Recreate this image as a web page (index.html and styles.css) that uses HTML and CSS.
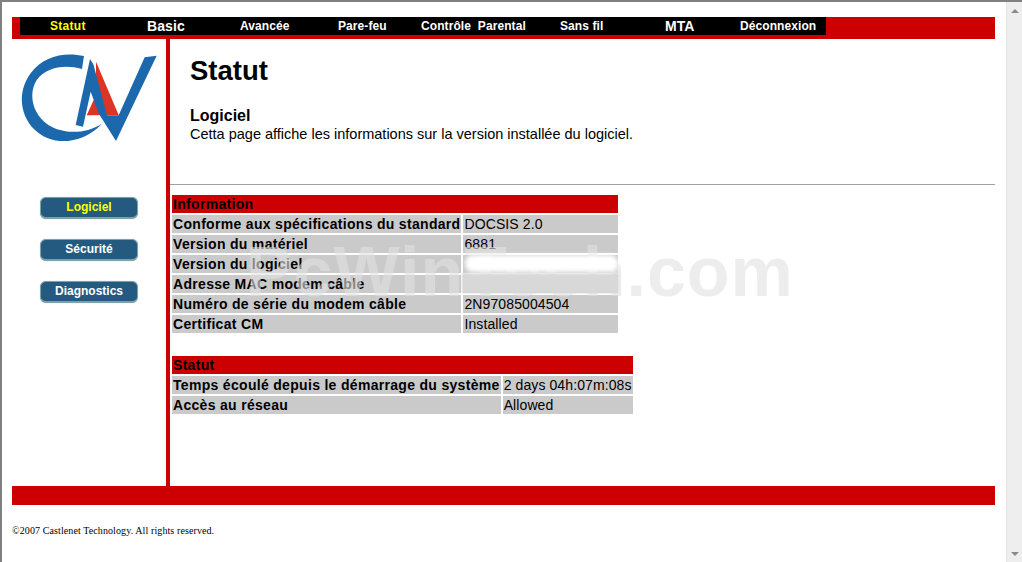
FILE: index.html
```html
<!DOCTYPE html>
<html lang="fr">
<head>
<meta charset="utf-8">
<title>Statut</title>
<link rel="stylesheet" href="styles.css">
</head>
<body>
<div class="window">
  <div class="page">
    <div class="topbar">
      <nav class="nav">
        <a class="nav-item active">Statut</a>
        <a class="nav-item large">Basic</a>
        <a class="nav-item">Avancée</a>
        <a class="nav-item">Pare-feu</a>
        <a class="nav-item">Contrôle  Parental</a>
        <a class="nav-item">Sans fil</a>
        <a class="nav-item large">MTA</a>
        <a class="nav-item">Déconnexion</a>
      </nav>
    </div>
    <div class="main">
      <aside class="sidebar">
        <svg class="logo" viewBox="6 0 459 315" width="153" height="105" aria-label="CN logo">
          <defs><filter id="soft"><feGaussianBlur stdDeviation="1.6"/></filter></defs>
          <g filter="url(#soft)">
            <path class="logo-red" d="M258 50 L326 210 L230 211 L258 150 Z"/>
            <path class="logo-blue" d="M222 33 C165 20 100 32 62 85 C22 140 28 210 75 255 C125 304 215 300 276 236 C225 268 160 268 115 240 C65 205 55 145 80 105 C110 65 165 58 216 72 Z"/>
            <path class="logo-blue" d="M240 42 L197 240 L219 245 L242 140 L267 207 L318 288 L440 32 L404 37 L326 211 L291 211 L250 58 Z"/>
          </g>
        </svg>
        <div class="side-menu">
          <a class="side-button active">Logiciel</a>
          <a class="side-button">Sécurité</a>
          <a class="side-button">Diagnostics</a>
        </div>
      </aside>
      <section class="content">
        <header class="intro">
          <h1>Statut</h1>
          <h2>Logiciel</h2>
          <p>Cetta page affiche les informations sur la version installée du logiciel.</p>
        </header>
        <table class="info first">
          <tr class="head"><th colspan="2">Information</th></tr>
          <tr><th>Conforme aux spécifications du standard</th><td>DOCSIS 2.0</td></tr>
          <tr><th>Version du matériel</th><td>6881</td></tr>
          <tr><th>Version du logiciel</th><td>&nbsp;</td></tr>
          <tr><th>Adresse MAC modem câble</th><td>&nbsp;</td></tr>
          <tr><th>Numéro de série du modem câble</th><td>2N97085004504</td></tr>
          <tr><th>Certificat CM</th><td class="wide-first">Installed</td></tr>
        </table>
        <table class="info">
          <tr class="head"><th colspan="2">Statut</th></tr>
          <tr><th>Temps écoulé depuis le démarrage du système</th><td>2 days 04h:07m:08s</td></tr>
          <tr><th>Accès au réseau</th><td>Allowed</td></tr>
        </table>
        <div class="watermark">PcWinTech.com</div>
        <div class="smudge low"></div>
        <div class="smudge"></div>
      </section>
    </div>
    <div class="footbar"></div>
    <p class="copyright">©2007 Castlenet Technology. All rights reserved.</p>
  </div>
  <div class="scrollbar">
    <span class="arrow up"></span>
    <span class="arrow down"></span>
  </div>
</div>
</body>
</html>
```
FILE: styles.css
```css
* { box-sizing: border-box; }
html, body { margin: 0; height: 100%; overflow: hidden; background: #fff; }
body { font-family: "Liberation Sans", Arial, sans-serif; color: #000; }
.window { display: flex; height: 562px; border-top: 2px solid #808080; border-left: 2px solid #808080; }
.page { flex: 1; padding: 15px 11px 0 10px; min-width: 0; }
.topbar { background: #cc0000; height: 22px; padding-left: 8px; }
.nav { display: grid; grid-template-columns: 97px 93px 98px 83px 139px 105px 75px 86px; width: 806px; height: 18px; background: #000; padding-left: 30px; }
.nav-item { color: #fff; font-weight: 700; font-size: 12px; line-height: 19px; letter-spacing: .08px; white-space: pre; }
.nav-item.large { font-size: 14px; line-height: 18px; }
.nav-item.active { color: #ffff00; letter-spacing: .3px; }
.main { display: flex; height: 447px; }
.sidebar { width: 158px; flex: none; border-right: 4px solid #cc0000; }
.logo { display: block; margin-top: 6px; }
.side-menu { display: flex; flex-direction: column; gap: 20px; margin-top: 47px; padding-left: 28px; }
.side-button { display: block; width: 98px; height: 22px; border-radius: 6px; background: #245a80; border: 1px solid #7fa0a5; border-bottom-width: 2px; box-shadow: 0 0 1px #9db5b8; color: #fff; font-weight: 700; font-size: 12px; line-height: 19px; text-align: center; }
.side-button.active { color: #ffff00; }
.content { flex: 1; position: relative; min-width: 0; }
.intro { height: 146px; border-bottom: 1px solid #a0a0a0; padding: 16px 0 0 20px; }
h1 { margin: 0; font-size: 27.5px; line-height: 31px; font-weight: 700; }
h2 { margin: 21px 0 0; font-size: 16px; line-height: 18px; font-weight: 700; }
.intro p { margin: 0; font-size: 14.5px; line-height: 18px; }
.info { border-collapse: separate; border-spacing: 2px; font-size: 14px; margin-bottom: 19px; }
.info.first { margin-top: 8px; }
.info th, .info td { background: #cacaca; padding: 0 1px; height: 18px; line-height: 18px; text-align: left; white-space: nowrap; }
.info th { letter-spacing: .31px; }
.info td { letter-spacing: .1px; }
.info .head th { background: #cc0000; }
.wide-first { min-width: 155px; }
.smudge { position: absolute; left: 295px; top: 216px; width: 153px; height: 17px; background: #fff; filter: blur(2px); border-radius: 8px; }
.smudge.low { left: 292px; top: 234px; width: 156px; height: 20px; background: #d8d8d8; filter: blur(1px); border-radius: 0; }
.watermark { position: absolute; left: 76px; top: 193px; font-size: 70px; line-height: 80px; font-weight: 700; letter-spacing: 1px; color: rgba(225, 225, 225, .6); white-space: nowrap; pointer-events: none; }
.logo-blue { fill: #1c68ad; }
.logo-red { fill: #dc3528; }
.copyright { margin: 20px 0 0; font-family: "Liberation Serif", "Times New Roman", serif; font-size: 10px; line-height: 12px; letter-spacing: .1px; }
.footbar { height: 19px; background: #cc0000; }
.scrollbar { flex: none; width: 16px; background: #eeeeee; border-left: 1px solid #e4e4e4; display: flex; flex-direction: column; justify-content: space-between; align-items: center; padding: 7px 0 6px; }
.arrow { width: 0; height: 0; border-left: 4px solid transparent; border-right: 4px solid transparent; }
.arrow.up { border-bottom: 4px solid #8a8a8a; }
.arrow.down { border-top: 4px solid #8a8a8a; }
```
